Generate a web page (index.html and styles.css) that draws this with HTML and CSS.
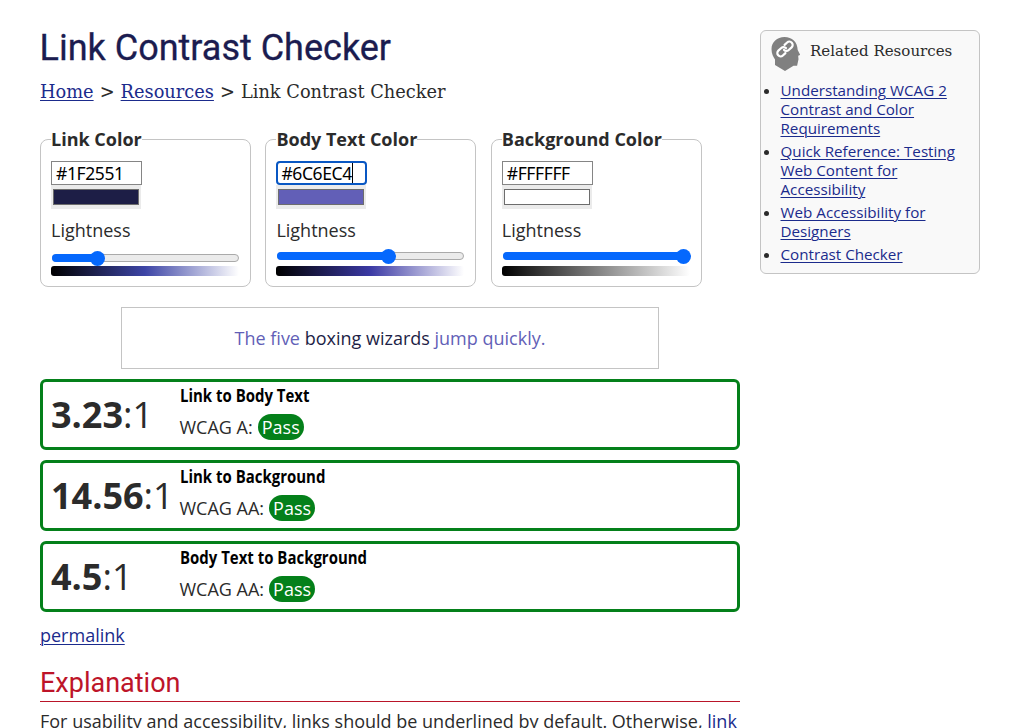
FILE: index.html
```html
<!DOCTYPE html>
<html lang="en">
<head>
<meta charset="utf-8">
<title>Link Contrast Checker</title>
<link rel="stylesheet" href="styles.css">
</head>
<body>
<div class="page">
  <main class="main">
    <h1 class="title">Link Contrast Checker</h1>
    <nav class="crumbs"><a href="#" class="home">Home</a><span class="sep">&gt;</span><a href="#" class="res">Resources</a><span class="sep">&gt;</span><span class="current">Link Contrast Checker</span></nav>

    <div class="pickers">
      <fieldset class="picker link-picker">
        <legend class="legend">Link Color</legend>
        <div class="hex">#1F2551</div>
        <div class="swatch"><div class="chip"></div></div>
        <div class="label">Lightness</div>
        <div class="slider"><div class="fill"></div><div class="thumb"></div></div>
        <div class="ramp"></div>
      </fieldset>
      <fieldset class="picker body-picker">
        <legend class="legend">Body Text Color</legend>
        <div class="hex focused">#6C6EC4<span class="caret"></span></div>
        <div class="swatch"><div class="chip"></div></div>
        <div class="label">Lightness</div>
        <div class="slider"><div class="fill"></div><div class="thumb"></div></div>
        <div class="ramp"></div>
      </fieldset>
      <fieldset class="picker bg-picker">
        <legend class="legend">Background Color</legend>
        <div class="hex">#FFFFFF</div>
        <div class="swatch"><div class="chip"></div></div>
        <div class="label">Lightness</div>
        <div class="slider"><div class="fill"></div><div class="thumb"></div></div>
        <div class="ramp"></div>
      </fieldset>
    </div>

    <div class="sample"><p class="sample-text">The five <span class="sample-link">boxing wizards</span> jump quickly.</p></div>

    <section class="result">
      <div class="ratio"><b>3.23</b>:1</div>
      <div class="detail"><h2 class="result-title">Link to Body Text</h2><div class="level">WCAG A: <span class="pass">Pass</span></div></div>
    </section>
    <section class="result">
      <div class="ratio"><b>14.56</b>:1</div>
      <div class="detail"><h2 class="result-title">Link to Background</h2><div class="level">WCAG AA: <span class="pass">Pass</span></div></div>
    </section>
    <section class="result">
      <div class="ratio"><b>4.5</b>:1</div>
      <div class="detail"><h2 class="result-title">Body Text to Background</h2><div class="level">WCAG AA: <span class="pass">Pass</span></div></div>
    </section>

    <div class="permalink"><a href="#">permalink</a></div>
    <h2 class="heading">Explanation</h2>
    <p class="copy">For usability and accessibility, links should be underlined by default. Otherwise, <a href="#">link</a></p>
  </main>

  <aside class="related">
    <div class="related-head">
      <svg class="head-icon" width="30" height="36" viewBox="0 0 30 36">
        <path fill="#808080" d="M14.500 1C7 1 1.500 6 1.500 13c0 5 2 8 3.500 10.500V29L15 35l8.500-5.200h3.600l1.400-6.500-.3-3.500 2-.8-2.500-5C27.500 6 22 1 14.500 1Z"/>
        <g transform="translate(15 13) rotate(-43)" fill="none" stroke="#fff" stroke-width="2.200" stroke-linecap="round">
          <path d="M-2.500 3.300H-6A3.300 3.300 0 0 1-6-3.300h4A3.300 3.300 0 0 1 1.300 0"/>
          <path d="M2.500-3.300H6A3.300 3.300 0 0 1 6 3.300H2A3.300 3.300 0 0 1-1.300 0"/>
        </g>
      </svg>
      <h2 class="related-title">Related Resources</h2>
    </div>
    <ul class="related-list">
      <li><a href="#">Understanding WCAG 2<br>Contrast and Color<br>Requirements</a></li>
      <li><a href="#">Quick Reference: Testing<br>Web Content for<br>Accessibility</a></li>
      <li><a href="#">Web Accessibility for<br>Designers</a></li>
      <li><a href="#">Contrast Checker</a></li>
    </ul>
  </aside>
</div>
</body>
</html>
```
FILE: styles.css
```css
* { box-sizing: border-box; }
html, body { height: 728px; overflow: hidden; }
body { margin: 0; background: #fff; color: #2b2b2b; font: 18px/24px "Open Sans", "Noto Sans", sans-serif; }
h1, h2, p, ul { margin: 0; padding: 0; }
a { color: #1b2b8c; text-decoration: underline; text-decoration-thickness: 1px; text-underline-offset: 2px; }
.page { display: flex; align-items: flex-start; gap: 20px; padding: 26px 45px 0 40px; }
.main { width: 700px; flex: none; }
.title { margin-left: -0.5px; color: #1b1c50; font: 400 36px/44px Roboto, sans-serif; -webkit-text-stroke: 0.3px #1b1c50; white-space: nowrap; }
.crumbs { display: flex; margin-top: 10px; height: 24px; font: 17.8px/24px "DejaVu Serif", serif; white-space: nowrap; }
.crumbs .sep { width: 27px; text-align: center; }
.pickers { display: flex; gap: 14.4px; margin-top: 24px; }
.picker { width: 211px; height: 159px; margin: 0; padding: 0 10px; border: 1px solid #c4c4c4; border-radius: 8px; }
.legend { padding: 0; height: 23px; font-weight: 700; font-size: 18px; line-height: 23px; white-space: nowrap; }
.hex { display: flex; align-items: center; width: 91px; height: 24px; margin-top: 10px; padding-left: 4px; border: 1px solid #858585; color: #000; font: 17.5px/22px "Noto Sans", sans-serif; letter-spacing: -0.4px; }
.focused { border: 2px solid #0957c3; border-radius: 4px; padding-left: 3px; }
.caret { width: 1px; height: 20px; background: #000; }
.swatch { width: 90px; height: 24px; padding: 4px 2px; background: #ebebeb; }
.chip { height: 16px; border: 1px solid #6d6d6d; }
.label { margin-top: 9px; height: 24px; }
.slider { display: flex; align-items: center; width: 187px; height: 8px; margin: 10px 0 6px 1px; border: 1px solid #aaa; border-radius: 4px; background: #ebebeb; }
.link-picker .slider { margin: 12px 0 4px 1px; }
.fill { height: 8px; margin-left: -1px; border-radius: 4px 0 0 4px; background: #0568fd; flex: none; }
.thumb { width: 15px; height: 15px; margin-left: -8px; border-radius: 50%; background: #0568fd; flex: none; }
.link-picker .fill { width: 46px; }
.body-picker .fill { width: 112px; }
.bg-picker .fill { width: 181px; }
.ramp { width: 188px; height: 10px; border-radius: 3px; }
.link-picker .chip { background: #1d1e46; }
.body-picker .chip { background: #625fb7; }
.bg-picker .chip { background: #fff; }
.link-picker .ramp { background: linear-gradient(90deg, #000, #3d45a6 50%, #fff); }
.body-picker .ramp { background: linear-gradient(90deg, #000, #3b39a4 50%, #fff); }
.bg-picker .ramp { background: linear-gradient(90deg, #000, #808080 50%, #fff); }
.sample { display: flex; align-items: center; justify-content: center; width: 538px; height: 62px; margin: 20px 0 10px 81px; border: 1px solid #c4c4c4; color: #625fb7; }
.sample-link { color: #1d1e46; }
.result { display: flex; height: 71px; margin-bottom: 10px; padding: 2px 8px; border: 3px solid #04801a; border-radius: 6px; }
.ratio { width: 128.500px; flex: none; font-size: 36px; line-height: 62px; white-space: nowrap; }
.result-title { width: max-content; margin-top: 1px; color: #000; font: 700 17px/22px "Open Sans", sans-serif; transform: scaleX(0.88); transform-origin: left; white-space: nowrap; }
.level { margin-top: 7px; line-height: 26px; display: flex; gap: 5px; white-space: nowrap; }
.pass { height: 26px; padding: 0 4px; border-radius: 13px; color: #fff; background: #04801a; }
.permalink { height: 24px; margin-top: 11px; }
.heading { margin-top: 22px; height: 33px; border-bottom: 1px solid #b91529; color: #bd1429; font: 400 27px/28px Roboto, sans-serif; }
.copy { margin-top: 7px; white-space: nowrap; }
.related { width: 220px; height: 244px; margin-top: 4px; padding: 5px 0 0 9px; border: 1px solid #c4c4c4; border-radius: 6px; background: #f9f9f9; }
.related-head { display: flex; gap: 10px; }
.head-icon { flex: none; }
.related-title { font: 400 15.05px/30px "DejaVu Serif", serif; white-space: nowrap; }
.related-list { margin: 9px 0 0 10.5px; font-size: 15.2px; line-height: 19px; white-space: nowrap; }
.related-list li { margin-bottom: 4px; }
```
